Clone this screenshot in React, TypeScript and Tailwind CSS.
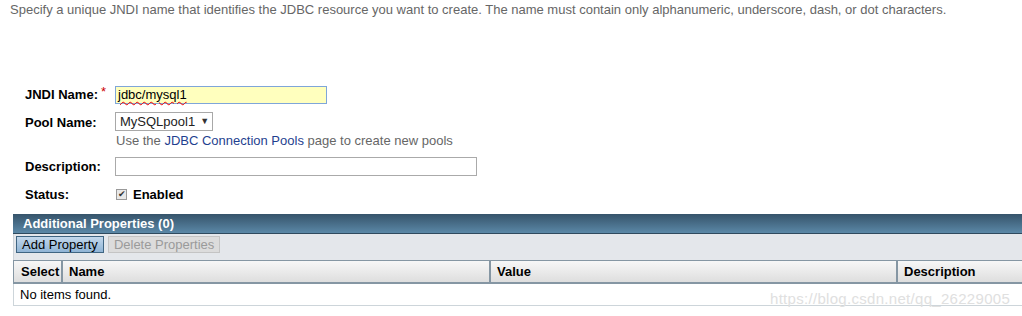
import React from "react";

export default function App() {
  return (
    <div
      className="relative w-[1022px] h-[316px] bg-white overflow-hidden text-[12px] text-[#333]"
      style={{ fontFamily: '"Liberation Sans", Arial, sans-serif' }}
    >
      <div className="pl-[10px] pt-[2px] text-[13px] leading-[15px] text-[#666]">
        Specify a unique JNDI name that identifies the JDBC resource you want to create. The name must contain only alphanumeric, underscore, dash, or dot characters.
      </div>

      <div className="pl-[25px] pt-[69px] flex flex-col">
        <div className="flex items-center h-[18px]">
          <div className="w-[90px] font-bold text-[13px] text-[#000] flex">
            <span>JNDI Name:</span>
            <span className="text-[#c00] ml-[3px] -mt-[3px] font-normal text-[13px]">*</span>
          </div>
          <div className="w-[212px] h-[18px] border border-[#7fa6d9] bg-[#ffffbe] pl-[2px] leading-[16px] text-[13px] text-[#000]">
            <span className="underline decoration-wavy decoration-[#e00] decoration-[1px] underline-offset-[2px]">jdbc/mysql1</span>
          </div>
        </div>

        <div className="flex mt-[8px]">
          <div className="w-[90px] font-bold text-[13px] text-[#000] pt-[1px]">Pool Name:</div>
          <div className="flex flex-col">
            <div className="w-[98px] h-[19px] border border-[#a8a8a8] bg-white flex items-center pl-[4px] text-[13px] text-[#222]">
              MySQLpool1
              <span className="ml-[5px] text-[9px] text-[#333]">▼</span>
            </div>
            <div className="mt-[2px] text-[13px] leading-[15px] text-[#666] pl-[1px]">
              Use the <span className="text-[#1f3f8f]">JDBC Connection Pools</span> page to create new pools
            </div>
          </div>
        </div>

        <div className="flex items-center mt-[9px]">
          <div className="w-[90px] font-bold text-[13px] text-[#000]">Description:</div>
          <div className="w-[362px] h-[19px] border border-[#aaa] bg-white" />
        </div>

        <div className="flex items-center mt-[8px]">
          <div className="w-[90px] font-bold text-[13px] text-[#000]">Status:</div>
          <div className="flex items-center ml-[1px]">
            <div className="w-[11px] h-[11px] border border-[#999] bg-[#e8e8e8] flex items-center justify-center text-[9px] leading-none text-[#333]">
              ✔
            </div>
            <span className="ml-[6px] font-bold text-[13px] text-[#000]">Enabled</span>
          </div>
        </div>
      </div>

      <div className="absolute left-[13px] top-[214px] w-[1020px]">
        <div className="h-[20px] bg-gradient-to-b from-[#36546b] to-[#5b88a7] border-b border-[#2f4a5e] text-white font-bold text-[13px] leading-[20px] pl-[10px]">
          Additional Properties (0)
        </div>
        <div className="h-[26px] bg-[#e4e7eb] flex items-start pt-[2px] pl-[2px] gap-[4px] border-l border-[#cdd3d9]">
          <div className="h-[17px] px-[5px] border border-[#3f6582] bg-gradient-to-b from-[#c3d8ec] to-[#8fb4d5] text-[13px] leading-[15px] text-[#000]">
            Add Property
          </div>
          <div className="h-[17px] px-[5px] border border-[#c4c4c4] bg-[#dcdcdc] text-[13px] leading-[15px] text-[#9a9a9a]">
            Delete Properties
          </div>
        </div>
        <div className="flex h-[24px] bg-gradient-to-b from-[#f7f7f7] to-[#dedede] border-t border-b-2 border-[#8596a3] border-l text-[13px] font-bold text-[#000] leading-[22px]">
          <div className="w-[49px] pl-[7px] border-r-2 border-[#8596a3]">Select</div>
          <div className="w-[428px] pl-[6px] border-r-2 border-[#8596a3]">Name</div>
          <div className="w-[407px] pl-[6px] border-r-2 border-[#8596a3]">Value</div>
          <div className="flex-1 pl-[6px]">Description</div>
        </div>
        <div className="h-[22px] border-b border-l border-[#cdd5da] text-[13px] leading-[22px] text-[#000] pl-[6px]">
          No items found.
        </div>
      </div>

      <div className="absolute left-[770px] top-[288px] text-[15px] text-[#e0e0e0] tracking-[0.3px]">
        https://blog.csdn.net/qq_26229005
      </div>
    </div>
  );
}
